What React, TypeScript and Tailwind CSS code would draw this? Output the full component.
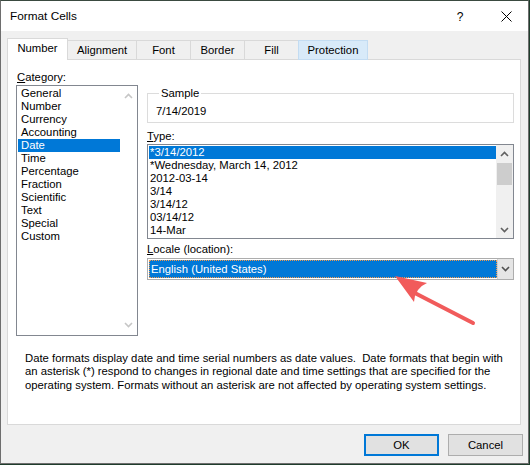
import React from 'react';

const categories = ['General', 'Number', 'Currency', 'Accounting', 'Date', 'Time', 'Percentage', 'Fraction', 'Scientific', 'Text', 'Special', 'Custom'];
const types = ['*3/14/2012', '*Wednesday, March 14, 2012', '2012-03-14', '3/14', '3/14/12', '03/14/12', '14-Mar'];

const Chevron = ({ up, color }: { up?: boolean; color: string }) => (
  <svg width="9" height="6" viewBox="0 0 9 6">
    <path d={up ? 'M1 5 L4.5 1.5 L8 5' : 'M1 1 L4.5 4.5 L8 1'} fill="none" stroke={color} strokeWidth="1.6" />
  </svg>
);

const Tab = ({ label, className }: { label: string; className: string }) => (
  <div className={`flex items-center justify-center ${className}`}>{label}</div>
);

export default function App() {
  return (
    <div className="w-[530px] h-[465px] bg-[#1f3d2c]">
      <div className="relative w-[529px] h-[464px] flex flex-col border-l border-r border-b border-t border-[#6e6e6e] border-t-[#3a4a40] bg-[#f0f0f0] font-['Liberation_Sans',Arial,sans-serif] text-[11.3px] text-black">
        {/* title bar */}
        <div className="h-[30px] bg-white flex items-center pl-[9px] pt-px">
          <span className="flex-1 text-[11.8px]">Format Cells</span>
          <span className="w-[10px] text-center text-[12px] mr-[36px]">?</span>
          <svg width="11" height="11" viewBox="0 0 11 11" className="mr-[16px]">
            <path d="M0.5 0.5 L10.5 10.5 M10.5 0.5 L0.5 10.5" stroke="#000" strokeWidth="1" />
          </svg>
        </div>

        {/* tabs */}
        <div className="relative z-10 flex items-end h-[22px] ml-[6px] mt-[7px] -mb-px">
          <Tab label="Number" className="w-[61px] h-[22px] bg-white border-t border-l border-r border-[#d9d9d9] pb-[2px] z-10" />
          <Tab label="Alignment" className="w-[70px] h-[20px] -ml-px border border-[#d9d9d9]" />
          <Tab label="Font" className="w-[55px] h-[20px] -ml-px border border-[#d9d9d9]" />
          <Tab label="Border" className="w-[55px] h-[20px] -ml-px border border-[#d9d9d9]" />
          <Tab label="Fill" className="w-[55px] h-[20px] -ml-px border border-[#d9d9d9]" />
          <Tab label="Protection" className="w-[70px] h-[20px] -ml-px border border-[#c3dcf2] bg-[#d8eaf9]" />
        </div>

        {/* tab panel */}
        <div className="ml-[6px] w-[514px] h-[366px] bg-white border border-[#d9d9d9] flex flex-col pt-[10px] pl-[8px]">
          <div className="flex">
            <div className="w-[122px]">
              <div className="h-[15px] leading-[15px] pl-px"><span className="underline">C</span>ategory:</div>
              <div className="h-[251px] border border-[#828790] flex">
                <div className="flex-1 pt-px pl-px">
                  {categories.map((c) => (
                    <div key={c} className={`h-[13px] leading-[13px] pl-[3px] ${c === 'Date' ? 'bg-[#0078d7] text-white' : ''}`}>{c}</div>
                  ))}
                </div>
                <div className="w-[17px] flex flex-col items-center justify-between pt-[7px] pb-[7px]">
                  <Chevron up color="#c6c6c6" />
                  <Chevron color="#c6c6c6" />
                </div>
              </div>
            </div>

            <div className="ml-[9px] w-[367px]">
              <fieldset className="mt-[16px] h-[37px] border border-[#dcdcdc] pl-[8px]">
                <legend className="ml-[3px] px-[2px] leading-[15px]">Sample</legend>
                <div className="leading-[15px] mt-[3px]">7/14/2019</div>
              </fieldset>
              <div className="mt-[5px] h-[16px] leading-[16px]"><span className="underline">T</span>ype:</div>
              <div className="h-[95px] border border-[#828790] flex">
                <div className="flex-1 pt-px pl-px">
                  {types.map((t, i) => (
                    <div key={t} className={`h-[13px] leading-[13px] pl-px ${i === 0 ? 'bg-[#0078d7] text-white' : ''}`}>{t}</div>
                  ))}
                </div>
                <div className="w-[17px] bg-[#f0f0f0] flex flex-col">
                  <div className="h-[18px] flex items-center justify-center"><Chevron up color="#606060" /></div>
                  <div className="h-[22px] mx-px bg-[#cdcdcd]"></div>
                  <div className="flex-1"></div>
                  <div className="h-[17px] flex items-center justify-center"><Chevron color="#606060" /></div>
                </div>
              </div>
              <div className="mt-[2px] h-[17px] leading-[17px]"><span className="underline">L</span>ocale (location):</div>
              <div className="h-[22px] border border-[#adadad] flex p-px">
                <div className="flex-1 bg-[#0078d7] text-white border border-dotted border-[#f39a4c] leading-[16px] pl-px">English (United States)</div>
                <div className="w-[16px] bg-[#e5e5e5] border-l border-[#d0d0d0] flex items-center justify-center -my-px -mr-px">
                  <Chevron color="#505050" />
                </div>
              </div>
            </div>
          </div>

          <p className="mt-[16px] pl-[9px] leading-[13.3px]">
            Date formats display date and time serial numbers as date values.&nbsp; Date formats that begin with<br />
            an asterisk (*) respond to changes in regional date and time settings that are specified for the<br />
            operating system. Formats without an asterisk are not affected by operating system settings.
          </p>
        </div>

        {/* buttons */}
        <div className="flex justify-end gap-[9px] mt-[9px] pr-[5px]">
          <button className="w-[75px] h-[22px] bg-[#e1e1e1] border-2 border-[#0078d7]">OK</button>
          <button className="w-[75px] h-[22px] bg-[#e1e1e1] border border-[#adadad]">Cancel</button>
        </div>

        {/* annotation arrow */}
        <svg className="absolute left-0 top-0 pointer-events-none" width="530" height="465" viewBox="0 0 530 465">
          <line x1="472" y1="322" x2="408" y2="289" stroke="#f15b5b" strokeWidth="4" strokeLinecap="round" />
          <path d="M394 275 L426 282 Q414 287 413 301 Z" fill="#f15b5b" />
        </svg>
      </div>
    </div>
  );
}
